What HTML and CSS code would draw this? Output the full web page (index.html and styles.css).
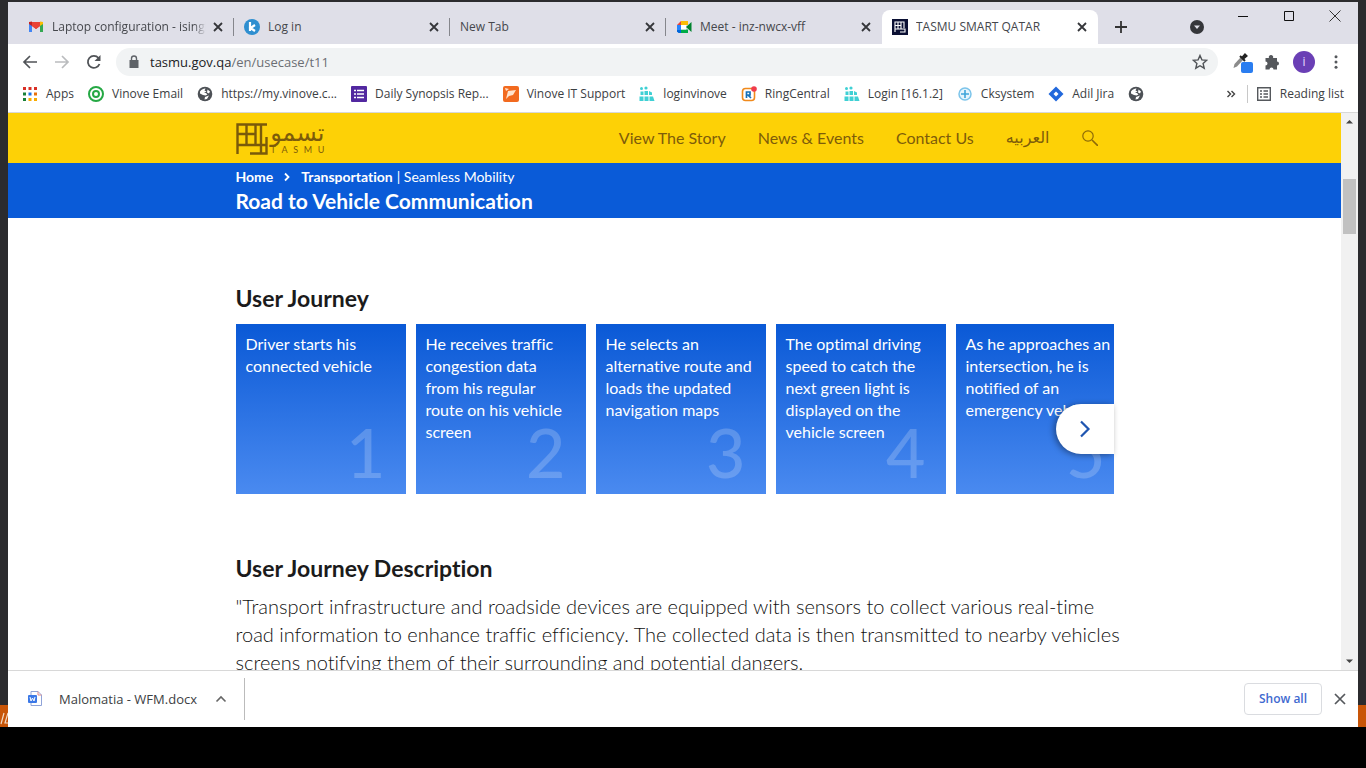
FILE: index.html
```html
<!DOCTYPE html>
<html lang="en">
<head>
<meta charset="utf-8">
<title>TASMU SMART QATAR</title>
<link rel="stylesheet" href="styles.css">
</head>
<body>
<svg class="defs" aria-hidden="true">
  <symbol id="x" viewBox="0 0 16 16"><path d="M4 4l8 8M12 4l-8 8" fill="none" stroke="currentColor" stroke-width="1.8"/></symbol>
  <symbol id="globe" viewBox="0 0 16 16"><circle cx="8" cy="8" r="7.3" fill="#4d5156"/><path d="M3 5.500C5 3 7 2.300 8.500 2.500L7.500 4.500l2 1-2.500 1.500H9l1.500 1.500-2 1L6 9 3 7.500zM10.500 3.500l2.500 2-1 2-2-1zM8 11l4-1.500-2 3.500-2.500.5z" fill="#fff"/></symbol>
  <symbol id="dots" viewBox="0 0 16 16"><g fill="#3fd0d4"><circle cx="2.500" cy="2.500" r="1.500"/><circle cx="7" cy="2" r="1.600"/><path d="M1.500 5.500h3v3.500h-3zM5.500 5h3.500v4H5.500zM10 5l3 1.500V9h-3zM.5 10.500h4v4.500h-4zM5.500 10.500h4v4.500h-4zM10.500 10.500H14l1.500 4.500h-5z"/></g></symbol>
</svg>
<div class="desktop">
<svg class="edge" viewBox="0 0 8 22" aria-hidden="true"><path d="M1 19L4 8M8 8L5 18h3" fill="none" stroke="#f3d9c4" stroke-width="1.200"/></svg>
<div class="window">
  <div class="tabstrip">
    <div class="tab">
      <svg class="ico" viewBox="0 0 16 16"><path d="M1 3v10h3V7l4 3 4-3v6h3V3z" fill="#ea4335"/><path d="M1 4v9h3V6z" fill="#4285f4"/><path d="M12 6v7h3V4z" fill="#34a853"/><path d="M1 3l3-.5V7L1 5z" fill="#c5221f"/><path d="M12 2.500l3 .5v2l-3 2z" fill="#fbbc04"/><path d="M4 3.500l4 3 4-3V7l-4 3-4-3z" fill="#ea4335"/></svg>
      <span class="tab-title fade">Laptop configuration - isingh</span>
      <button class="close" aria-label="Close tab"><svg class="ico"><use href="#x"/></svg></button>
    </div>
    <div class="tab">
      <svg class="ico" viewBox="0 0 16 16"><circle cx="8" cy="8" r="8" fill="#2f8fd0"/><path d="M6 3v9M11 6L6.500 9l4.500 3" fill="none" stroke="#fff" stroke-width="2.200"/></svg>
      <span class="tab-title">Log in</span>
      <button class="close" aria-label="Close tab"><svg class="ico"><use href="#x"/></svg></button>
    </div>
    <div class="tab">
      <span class="tab-title">New Tab</span>
      <button class="close" aria-label="Close tab"><svg class="ico"><use href="#x"/></svg></button>
    </div>
    <div class="tab">
      <svg class="ico" viewBox="0 0 16 16"><path d="M1 6l4-4v4z" fill="#ea4335"/><path d="M5 2h7v4H5z" fill="#fbbc04"/><path d="M1 6h4v5H1z" fill="#2684fc"/><path d="M1 11h4v3H2.500L1 12.500z" fill="#0066da"/><path d="M5 10.500h7V14H5z" fill="#00ac47"/><path d="M5 6h5v4.500H5z" fill="#fff"/><path d="M10 8l5.500-5v10z" fill="#00832d"/></svg>
      <span class="tab-title">Meet - inz-nwcx-vff</span>
      <button class="close" aria-label="Close tab"><svg class="ico"><use href="#x"/></svg></button>
    </div>
    <div class="tab active">
      <svg class="ico" viewBox="0 0 16 16"><path d="M0 0h16v16H0z" fill="#0b1033"/><path d="M3 13V3h9v6M3 6.500h6M3 10h10v3H8M6 3v7M9 3v7" fill="none" stroke="#fff" stroke-width="1.100"/></svg>
      <span class="tab-title">TASMU SMART QATAR</span>
      <button class="close" aria-label="Close tab"><svg class="ico"><use href="#x"/></svg></button>
    </div>
    <button class="newtab" aria-label="New tab"><svg class="ico" viewBox="0 0 16 16"><path d="M8 2v12M2 8h12" stroke="#333" stroke-width="1.800"/></svg></button>
    <div class="controls">
      <button class="search-tabs" aria-label="Search tabs"><svg class="ico" viewBox="0 0 16 16"><circle cx="8" cy="8" r="7" fill="#35363a"/><path d="M5 6.500h6L8 10z" fill="#e0e0e8"/></svg></button>
      <button aria-label="Minimize"><svg class="ico" viewBox="0 0 16 16"><path d="M3 8.500h10" stroke="#111"/></svg></button>
      <button aria-label="Maximize"><svg class="ico" viewBox="0 0 16 16"><path d="M3.500 3.500h9v9h-9z" fill="none" stroke="#111"/></svg></button>
      <button aria-label="Close window"><svg class="ico" viewBox="0 0 16 16"><path d="M2.500 2.500l11 11M13.500 2.500l-11 11" stroke="#333"/></svg></button>
    </div>
  </div>
  <div class="toolbar">
    <button aria-label="Back"><svg class="ico" viewBox="0 0 16 16"><path d="M15 8H2M8 2L2 8l6 6" fill="none" stroke="#505357" stroke-width="1.700"/></svg></button>
    <button aria-label="Forward"><svg class="ico" viewBox="0 0 16 16"><path d="M1 8h13M8 2l6 6-6 6" fill="none" stroke="#babcbe" stroke-width="1.700"/></svg></button>
    <button aria-label="Reload"><svg class="ico" viewBox="0 0 16 16"><path d="M13.500 10A6 6 0 1 1 12.500 4" fill="none" stroke="#505357" stroke-width="1.800"/><path d="M14.500 1v6h-6z" fill="#505357"/></svg></button>
    <div class="omnibox">
      <svg class="lock" viewBox="0 0 12 16"><path d="M1.500 6h9v8h-9z" fill="#5f6368"/><path d="M3.500 6V4.500a2.500 2.500 0 0 1 5 0V6" fill="none" stroke="#5f6368" stroke-width="1.400"/></svg>
      <span class="url">tasmu.gov.qa<span class="path">/en/usecase/t11</span></span>
      <button aria-label="Bookmark this tab"><svg class="ico" viewBox="0 0 16 16"><path d="M8 1.500l1.900 4.400 4.800.4-3.600 3.200 1.100 4.700L8 11.700l-4.200 2.500 1.100-4.700L1.300 6.300l4.800-.4z" fill="none" stroke="#505357" stroke-width="1.400"/></svg></button>
    </div>
    <button class="picker-btn" aria-label="Color picker"><svg class="picker" viewBox="0 0 22 22"><path d="M1.500 17l1-4 6-6.500 2.500 2.500-6 6.500z" fill="#8b8b8b"/><path d="M8 5l5 5M10 7l3-3.500 1.500 1.500L11 8z" fill="#222" stroke="#222" stroke-width="2"/><rect x="9" y="11" width="12" height="11" rx="2" fill="#2a7df0"/></svg></button>
    <button aria-label="Extensions"><svg class="ico" viewBox="0 0 16 16"><path d="M1.500 4H5a2.200 2.200 0 1 1 4 0h4v3.500a2 2 0 1 1 0 4V15.500H9.500a2 2 0 1 0-4 0h-4V11.500a2 2 0 1 0 0-4z" fill="#55585c"/></svg></button>
    <button class="avatar" aria-label="Profile">i</button>
    <button aria-label="Menu"><svg class="ico" viewBox="0 0 16 16"><g fill="#55585c"><circle cx="8" cy="2.800" r="1.500"/><circle cx="8" cy="8" r="1.500"/><circle cx="8" cy="13.200" r="1.500"/></g></svg></button>
  </div>
  <nav class="bookmarks" aria-label="Bookmarks">
    <a href="#"><svg class="ico" viewBox="0 0 16 16"><g fill="#d93025"><path d="M1 1h3v3H1zM6.500 1h3v3h-3zM12 1h3v3h-3z"/></g><path d="M1 6.500h3v3H1z" fill="#188038"/><path d="M6.500 6.500h3v3h-3z" fill="#1a73e8"/><path d="M12 6.500h3v3h-3z" fill="#e8710a"/><path d="M1 12h3v3H1z" fill="#188038"/><path d="M6.500 12h3v3h-3zM12 12h3v3h-3z" fill="#f9ab00"/></svg>Apps</a>
    <a href="#"><svg class="ico" viewBox="0 0 16 16"><g fill="none" stroke="#25a844" stroke-width="2"><circle cx="8" cy="8" r="7"/><circle cx="8" cy="8" r="3"/></g></svg>Vinove Email</a>
    <a href="#"><svg class="ico"><use href="#globe"/></svg>https://my.vinove.c...</a>
    <a href="#"><svg class="ico" viewBox="0 0 16 16"><rect width="16" height="16" rx="1" fill="#5228a0"/><path d="M3 4.500h2M3 8h2M3 11.500h2M6 4.500h7M6 8h7M6 11.500h7" stroke="#fff" stroke-width="1.600"/></svg>Daily Synopsis Rep...</a>
    <a href="#"><svg class="ico" viewBox="0 0 16 16"><rect width="16" height="16" rx="2" fill="#f26a1f"/><path d="M3 13L5 5l8-1-3 5-4 1z" fill="#ffe3cd"/><path d="M2 2l4 1-3 2z" fill="#ffe3cd"/></svg>Vinove IT Support</a>
    <a href="#"><svg class="ico"><use href="#dots"/></svg>loginvinove</a>
    <a href="#"><svg class="ico" viewBox="0 0 16 16"><rect x="1.500" y="2.500" width="12" height="12" rx="3" fill="#fff" stroke="#f08a1c" stroke-width="1.600"/><path d="M5.500 12V6h3.500v3H7l3 3" fill="none" stroke="#1670b8" stroke-width="1.700"/><circle cx="13" cy="3" r="2.800" fill="#f03c4c"/></svg>RingCentral</a>
    <a href="#"><svg class="ico"><use href="#dots"/></svg>Login [16.1.2]</a>
    <a href="#"><svg class="ico" viewBox="0 0 16 16"><circle cx="8" cy="8" r="6" fill="#e6f5fd" stroke="#7cc4ea" stroke-width="1.500"/><path d="M8 4v8M4 8h8" stroke="#3fa5da" stroke-width="1.600"/></svg>Cksystem</a>
    <a href="#"><svg class="ico" viewBox="0 0 16 16"><path d="M8 .5L15.500 8 8 15.500.5 8z" fill="#2168dc"/><path d="M8 5.500L10.500 8 8 10.500 5.500 8z" fill="#fff"/></svg>Adil Jira</a>
    <a href="#" aria-label="Bookmark"><svg class="ico"><use href="#globe"/></svg></a>
    <button class="more" aria-label="More bookmarks"><svg class="ico" viewBox="0 0 16 16"><path d="M4.500 5l3 3-3 3M8.500 5l3 3-3 3" fill="none" stroke="#444" stroke-width="1.400"/></svg></button>
    <button class="reading"><svg class="ico" viewBox="0 0 16 16"><path d="M1.700 1.700h12.600v12.600H1.700z" fill="none" stroke="#55585c" stroke-width="1.400"/><path d="M4 5h2M4 8h2M4 11h2M7.500 5H12M7.500 8H12M7.500 11H12" stroke="#55585c" stroke-width="1.300"/></svg>Reading list</button>
  </nav>
  <div class="viewport">
    <div class="page">
      <header class="site-header">
        <div class="container header-row">
          <a class="logo" href="#" aria-label="TASMU">
            <svg class="mark" viewBox="0 0 32 32"><path d="M1.500 31V1.500H31M10.500 1v21M1 11h19.500M19.500 1v21M1 22h30M25 1v29M30.500 14v16.500H14" fill="none" stroke="#7a5a0a" stroke-width="2.400"/></svg>
            <span class="words"><span class="word-ar" lang="ar">تسمو</span><span class="word-en"><span>T</span><span>A</span><span>S</span><span>M</span><span>U</span></span></span>
          </a>
          <nav class="site-nav" aria-label="Main">
            <a href="#">View The Story</a>
            <a href="#">News &amp; Events</a>
            <a href="#">Contact Us</a>
            <a class="arabic" href="#" lang="ar">العربيه</a>
            <button aria-label="Search"><svg class="ico" viewBox="0 0 16 16"><circle cx="6" cy="6" r="5.200" fill="none" stroke="#8d6a08" stroke-width="1.200"/><path d="M10 10l6 6" stroke="#8d6a08" stroke-width="1.600"/></svg></button>
          </nav>
        </div>
      </header>
      <div class="titlebar">
        <div class="container">
          <nav class="crumbs" aria-label="Breadcrumb"><a href="#">Home</a><svg class="sep" viewBox="0 0 8 10"><path d="M2 1.500L5.500 5 2 8.500" fill="none" stroke="#fff" stroke-width="1.800"/></svg><a href="#">Transportation</a><span>| Seamless Mobility</span></nav>
          <h1>Road to Vehicle Communication</h1>
        </div>
      </div>
      <main class="container content">
        <h2>User Journey</h2>
        <div class="slider">
          <ol class="cards">
            <li class="card">Driver starts his connected vehicle<span class="num">1</span></li>
            <li class="card">He receives traffic congestion data from his regular route on his vehicle screen<span class="num">2</span></li>
            <li class="card">He selects an alternative route and loads the updated navigation maps<span class="num">3</span></li>
            <li class="card">The optimal driving speed to catch the next green light is displayed on the vehicle screen<span class="num">4</span></li>
            <li class="card">As he approaches an intersection, he is notified of an emergency vehicle<span class="num">5</span></li>
          </ol>
          <button class="next" aria-label="Next"><svg class="chev" viewBox="0 0 12 18"><path d="M2 1.500L9.500 9 2 16.500" fill="none" stroke="#1f55b0" stroke-width="2.200"/></svg></button>
        </div>
        <h2>User Journey Description</h2>
        <p>"Transport infrastructure and roadside devices are equipped with sensors to collect various real-time road information to enhance traffic efficiency. The collected data is then transmitted to nearby vehicles screens notifying them of their surrounding and potential dangers.</p>
      </main>
    </div>
    <div class="scrollbar" aria-hidden="true">
      <svg class="arrow" viewBox="0 0 17 17"><path d="M5 10.500h7L8.500 7z" fill="#444"/></svg>
      <div class="track"><div class="thumb"></div></div>
      <svg class="arrow" viewBox="0 0 17 17"><path d="M5 6.500h7L8.500 10z" fill="#444"/></svg>
    </div>
  </div>
  <div class="downloads">
    <button class="file"><svg class="ico" viewBox="0 0 16 16"><path d="M4 .5h7L14.500 4v10.500H4z" fill="#fff" stroke="#8fa3d8"/><path d="M11 .5V4h3.500" fill="none" stroke="#e08a8a"/><rect x="1" y="4" width="9" height="8" rx="1" fill="#3b78e7"/><path d="M3 6l1 4 1.500-3L7 10l1-4" fill="none" stroke="#fff"/></svg><span class="fname">Malomatia - WFM.docx</span><svg class="ico" viewBox="0 0 16 16"><path d="M3.500 10.500L8 6l4.500 4.500" fill="none" stroke="#666" stroke-width="1.600"/></svg></button>
    <button class="showall">Show all</button>
    <button class="close dismiss" aria-label="Close downloads bar"><svg class="ico" viewBox="0 0 16 16"><path d="M3 3l10 10M13 3L3 13" stroke="#55585c" stroke-width="1.700"/></svg></button>
  </div>
</div>
</div>
<div class="taskbar"></div>
</body>
</html>
```
FILE: styles.css
```css
* { box-sizing: border-box; }
body { margin: 0; height: 100vh; display: flex; flex-direction: column; overflow: hidden; background: #000; font: 12px/16px "Open Sans", "Noto Sans", sans-serif; color: #3c4043; }
button { border: 0; padding: 0; background: none; font: inherit; color: inherit; display: flex; align-items: center; justify-content: center; }
a { color: inherit; text-decoration: none; }
.defs { display: none; }
.ico { width: 16px; height: 16px; flex: none; display: block; }

.desktop { position: relative; flex: 1; min-height: 0; display: flex; padding: 2px 8px 0; background: linear-gradient(to top, #c85508 22px, #2b2b2e 22px); }
.edge { position: absolute; left: 0; bottom: 0; width: 8px; height: 22px; }
.window { flex: 1; min-width: 0; display: flex; flex-direction: column; background: #fff; }
.taskbar { height: 41px; background: #000; }

.tabstrip { height: 42px; flex: none; display: flex; align-items: flex-end; padding-left: 10px; background: #dfdfe8; }
.tab { width: 216px; height: 34px; display: flex; align-items: center; gap: 8px; padding: 0 8px 0 10px; position: relative; color: #45474c; }
.tab:not(.active):not(:nth-child(4))::after { content: ""; position: absolute; right: 0; top: 8px; height: 18px; width: 1px; background: #85868c; }
.tab-title { flex: 1; margin-right: -4px; white-space: nowrap; overflow: hidden; }
.fade { mask-image: linear-gradient(to right, #000 92%, transparent); }
.close { color: #35363a; }
.active { background: #fff; border-radius: 8px 8px 0 0; }
.newtab { width: 28px; height: 34px; margin-left: 9px; }
.controls { display: flex; align-self: stretch; margin-left: auto; gap: 30px; padding-right: 15px; align-items: flex-start; }
.controls button { height: 28px; }
.controls .search-tabs { height: 50px; }

.toolbar { height: 36px; flex: none; display: flex; align-items: center; gap: 16px; padding: 0 14px; }
.omnibox { flex: 1; height: 28px; display: flex; align-items: center; gap: 10px; margin: 0 -2px; padding: 0 10px 0 12px; border-radius: 14px; background: #f1f3f4; }
.lock { width: 12px; height: 16px; }
.url { flex: 1; color: #202124; font-size: 13px; line-height: 20px; }
.path { color: #6b6e73; }
.picker-btn { margin-right: -6px; }
.picker { width: 22px; height: 22px; }
.avatar { width: 22px; height: 22px; margin: 0 -3px; border-radius: 50%; background: #6a3fb5; color: #e8dcff; }

.bookmarks { height: 33px; flex: none; display: flex; align-items: center; gap: 14px; padding: 0 14px 5px 14px; border-bottom: 1px solid #d8d8d8; white-space: nowrap; }
.bookmarks a, .reading { display: flex; align-items: center; gap: 8px; }
.more { margin: 0 -6px 0 auto; }
.reading { height: 18px; padding-left: 8px; border-left: 1px solid #c8c8c8; }

.viewport { flex: 1; min-height: 0; display: flex; background: #fff; }
.page { flex: 1; min-width: 0; overflow: hidden; font-family: Lato, sans-serif; font-variant-ligatures: none; }
.container { max-width: 878px; margin: 0 auto; }
.site-header { background: #fdd106; color: #7d5c0a; }
.header-row { height: 50px; display: flex; align-items: center; justify-content: space-between; }
.logo { display: flex; align-items: center; gap: 3px; padding-top: 1px; }
.mark { width: 32px; height: 32px; }
.words { display: flex; flex-direction: column; width: 54px; }
.word-ar { font: 400 24px/22px "DejaVu Sans", sans-serif; height: 22px; direction: rtl; }
.word-en { display: flex; justify-content: space-between; font-size: 9px; line-height: 12px; }
.site-nav { display: flex; align-items: center; gap: 32px; padding-right: 16px; font-size: 16px; line-height: 24px; }
.arabic { font: 16px/24px "DejaVu Sans", sans-serif; }

.titlebar { height: 55px; padding-top: 4px; background: #0a5bd8; color: #fff; }
.crumbs { display: flex; align-items: center; gap: 4px; font-size: 14px; line-height: 20px; }
.crumbs a { font-weight: 700; }
.sep { width: 8px; height: 10px; margin: 0 6px; }
h1 { margin: 0; font-size: 21px; line-height: 28px; font-weight: 700; }

.content { padding-top: 66px; color: #1b1b1b; }
h2 { margin: 0; font-size: 23px; line-height: 28px; font-weight: 700; }
.slider { position: relative; margin: 12px 0 60px; }
.cards { display: flex; gap: 10px; margin: 0; padding: 0; list-style: none; overflow: hidden; }
.card { position: relative; flex: none; width: 170px; height: 170px; padding: 9px 12px 9px 10px; background: linear-gradient(#0a59d6, #4a8af0); color: #fff; font-size: 16px; line-height: 22px; }
.num { position: absolute; right: 20px; bottom: 12px; font-size: 68px; line-height: 60px; font-weight: 500; color: rgba(255, 255, 255, .2); }
.next { position: absolute; right: 0; top: 80px; width: 58px; height: 50px; border-radius: 25px 0 0 25px; background: #fff; box-shadow: -2px 1px 6px rgba(0, 0, 0, .4); }
.chev { width: 12px; height: 18px; }
p { margin: 10px -12px 0 0; font-size: 20px; line-height: 28px; font-weight: 300; color: #111; }

.scrollbar { width: 17px; flex: none; display: flex; flex-direction: column; background: #f1f1f1; }
.arrow { width: 17px; height: 17px; }
.track { flex: 1; padding: 49px 2px 0; }
.thumb { height: 55px; background: #c1c1c1; }

.downloads { height: 57px; flex: none; display: flex; align-items: center; gap: 10px; padding-right: 10px; border-top: 1px solid #d8d8d8; }
.file { height: 42px; gap: 16px; padding: 0 15px 0 19px; border-right: 1px solid #bbb; font-size: 13px; }
.showall { height: 32px; width: 78px; margin-left: auto; border: 1px solid #dadce0; border-radius: 4px; color: #3f6ad0; font-weight: 600; }
```
